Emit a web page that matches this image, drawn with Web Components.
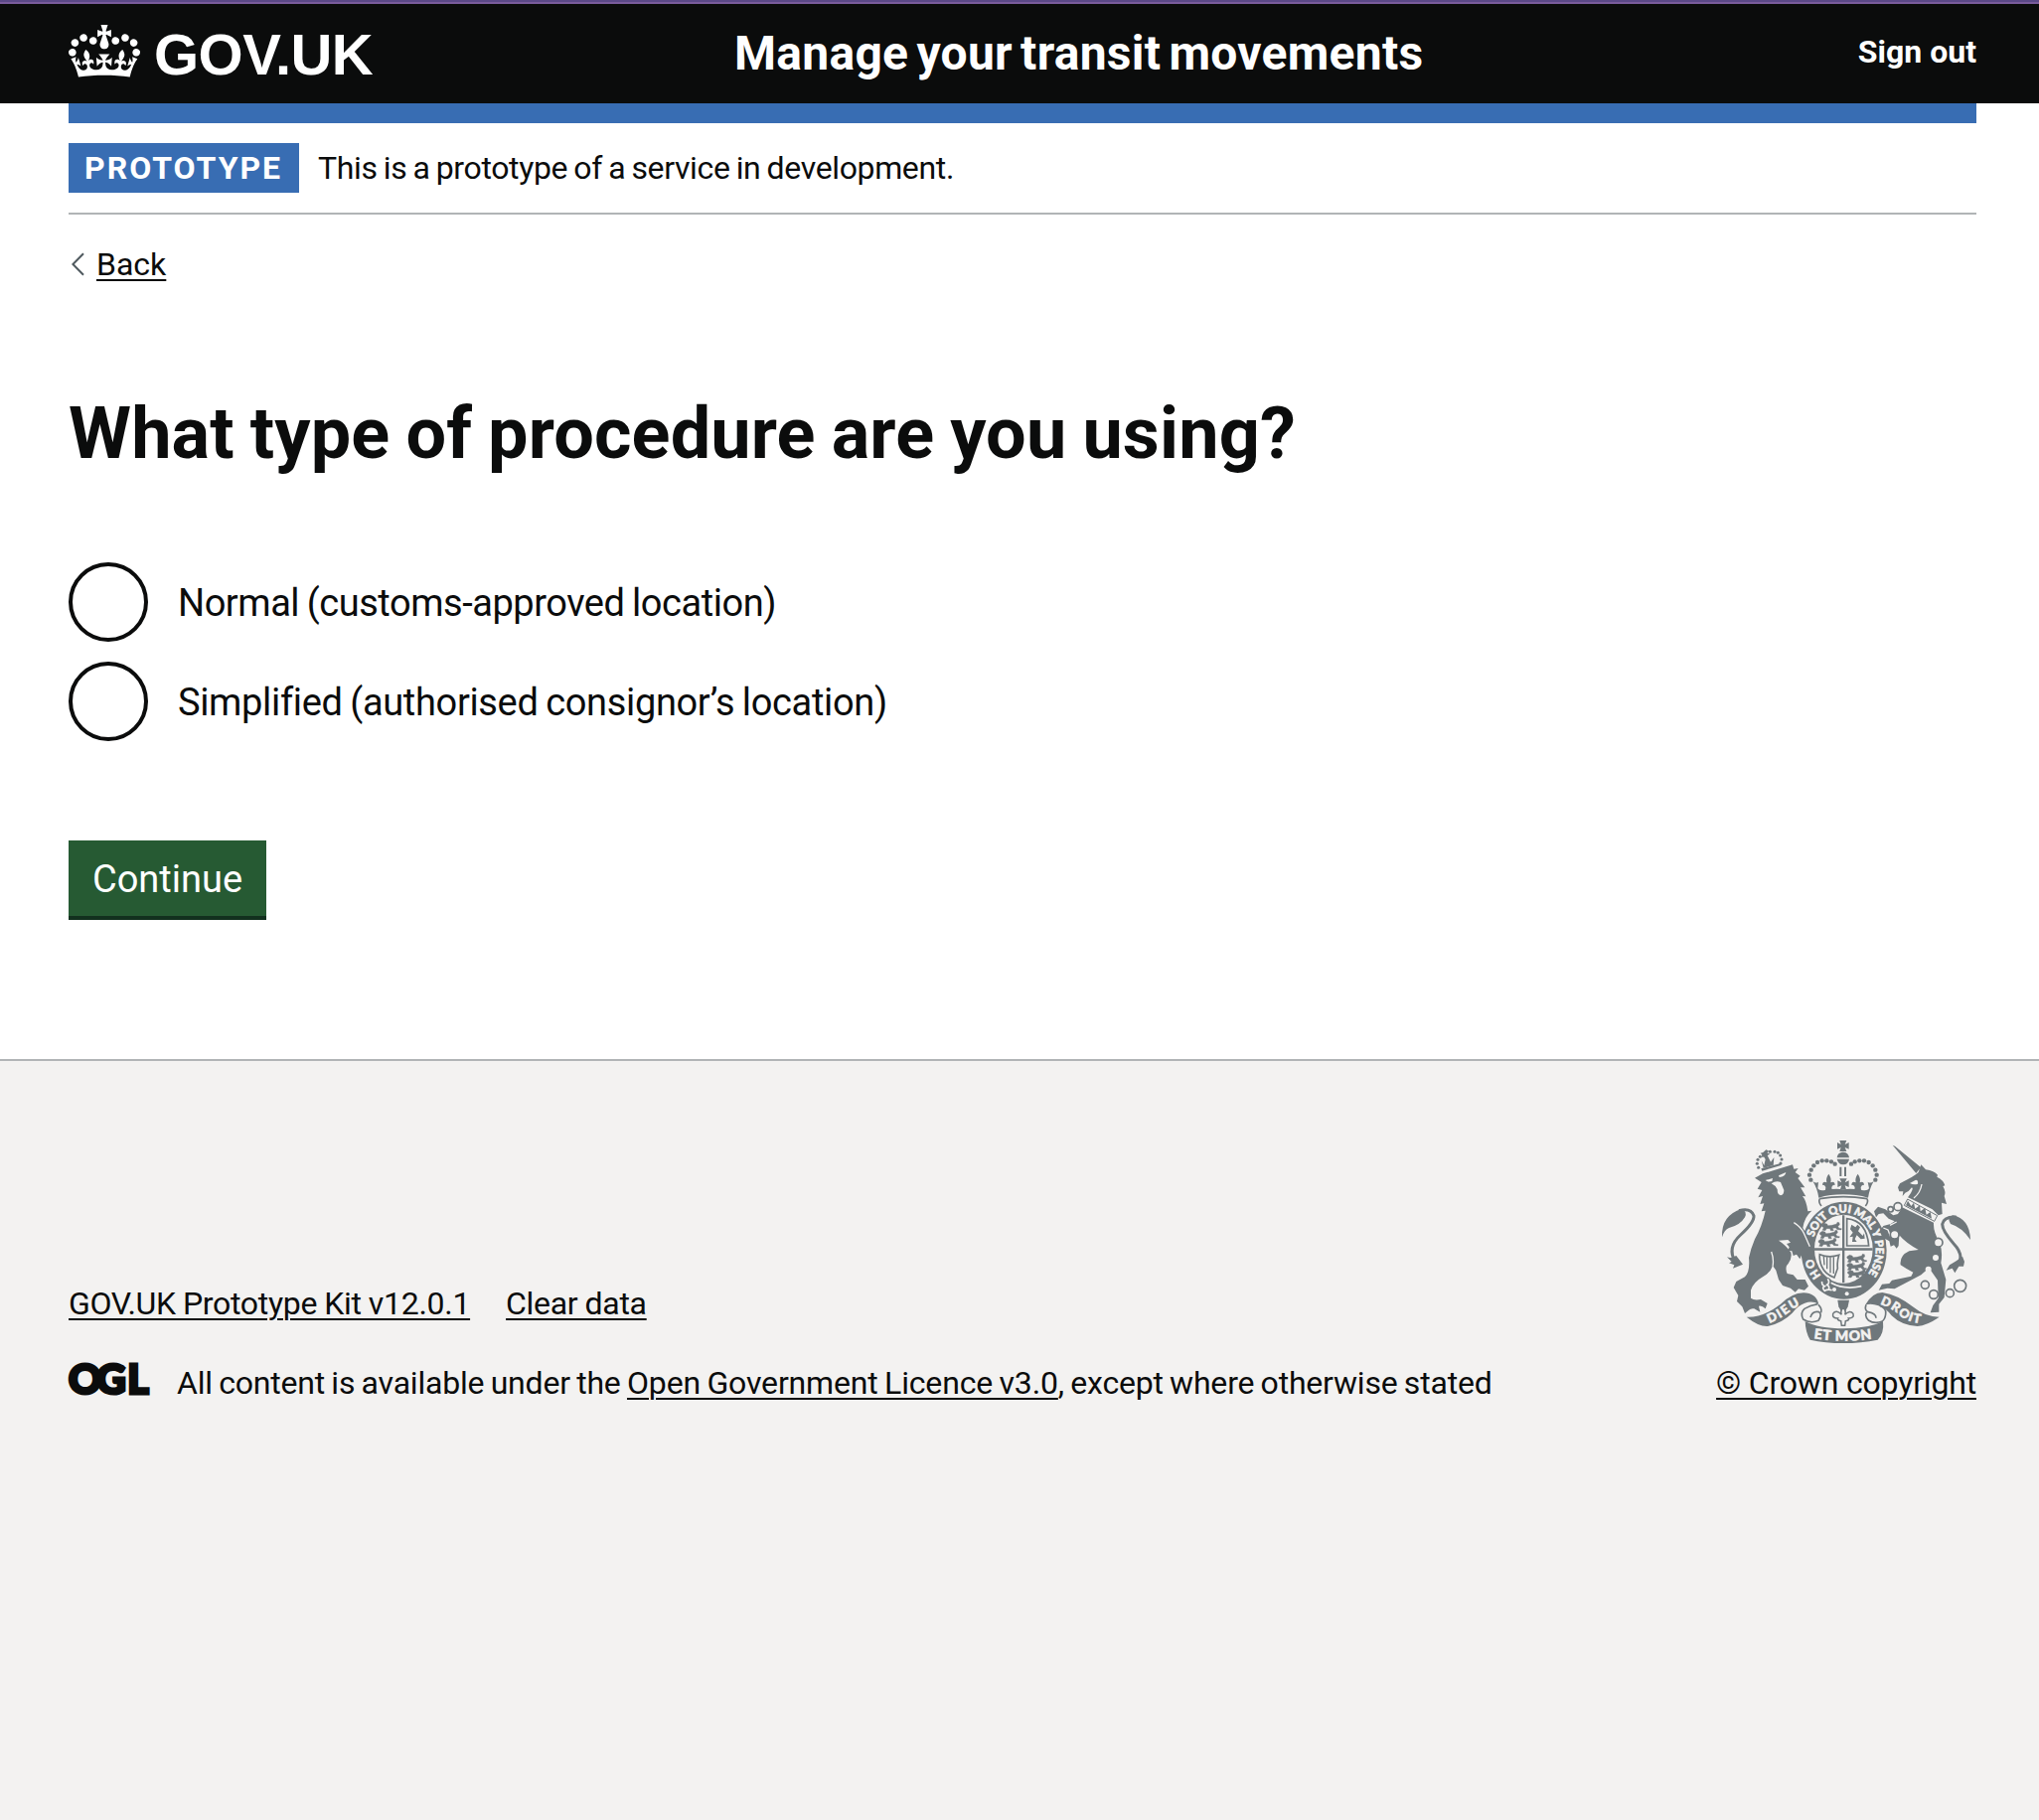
<!DOCTYPE html>
<html lang="en">
<head>
<meta charset="utf-8">
<title>What type of procedure are you using?</title>
<style>
html,body{margin:0;height:100%;background:#fff}
body{font-family:Roboto,"Liberation Sans",sans-serif;color:#0b0c0c;font-size:32px;line-height:40px}
</style>
</head>
<body>
<prototype-page></prototype-page>
<script>
function define(name, html){
  const t=document.createElement('template');
  t.innerHTML=html;
  customElements.define(name,class extends HTMLElement{
    constructor(){super();this.attachShadow({mode:'open'}).appendChild(t.content.cloneNode(true));}
  });
}

define('crown-icon',`<style>:host{display:block;width:72px;height:53px}svg{display:block}</style>
<svg width="72" height="53" viewBox="0 0 132 97"><path fill="#fff" fill-rule="evenodd" d="M25 30.2c3.5 1.5 7.7-.2 9.1-3.7 1.5-3.6-.2-7.8-3.9-9.2-3.6-1.4-7.6.3-9.1 3.9-1.4 3.5.3 7.5 3.9 9zM9 39.5c3.6 1.5 7.8-.2 9.2-3.7 1.5-3.6-.2-7.8-3.9-9.1-3.6-1.5-7.6.2-9.1 3.8-1.4 3.5.3 7.5 3.8 9zM4.4 57.2c3.5 1.5 7.7-.2 9.1-3.8 1.5-3.6-.2-7.7-3.9-9.1-3.5-1.5-7.6.3-9.1 3.8-1.4 3.5.3 7.6 3.9 9.1zm38.3-21.4c3.5 1.5 7.7-.2 9.1-3.8 1.5-3.6-.2-7.7-3.9-9.1-3.6-1.5-7.6.3-9.1 3.8-1.3 3.6.4 7.7 3.9 9.1zm64.4-5.6c-3.6 1.5-7.8-.2-9.1-3.7-1.5-3.6.2-7.8 3.8-9.2 3.6-1.4 7.7.3 9.2 3.9 1.3 3.5-.4 7.5-3.9 9zm15.9 9.3c-3.6 1.5-7.7-.2-9.1-3.7-1.5-3.6.2-7.8 3.7-9.1 3.6-1.5 7.7.2 9.2 3.8 1.5 3.5-.3 7.5-3.8 9zm4.7 17.7c-3.6 1.5-7.8-.2-9.2-3.8-1.5-3.6.2-7.7 3.9-9.1 3.6-1.5 7.7.3 9.2 3.8 1.3 3.5-.4 7.6-3.9 9.1zM89.3 35.8c-3.6 1.5-7.8-.2-9.2-3.8-1.4-3.6.2-7.7 3.9-9.1 3.6-1.5 7.7.3 9.2 3.8 1.4 3.6-.3 7.7-3.9 9.1zM69.7 17.7l8.9 4.7V9.3l-8.9 2.8c-.2-.3-.5-.6-.9-.9L72.4 0H59.6l3.5 11.2c-.3.3-.6.5-.9.9l-8.8-2.8v13.1l8.8-4.7c.3.3.6.7.9.9l-5 15.4v.1c-.2.8-.4 1.6-.4 2.4 0 4.1 3.1 7.5 7 8.1h.2c.3 0 .7.1 1 .1.4 0 .7 0 1-.1h.2c4-.6 7.1-4.1 7.1-8.1 0-.8-.1-1.7-.4-2.4V34l-5.1-15.4c.4-.2.7-.6 1-.9zM66 92.8c16.9 0 32.8 1.1 47.1 3.2 4-16.9 8.9-26.7 14-33.5l-9.6-3.4c1 4.9 1.1 7.2 0 10.2-1.5-1.4-3-4.3-4.2-8.7L108.6 76c2.8-2 5-3.2 7.5-3.3-4.4 9.4-10 11.9-13.6 11.2-4.3-.8-6.3-4.6-5.6-7.9 1-4.7 5.7-5.9 8-.5 4.3-8.7-3-11.4-7.6-8.8 7.1-7.2 7.9-13.5 2.1-21.1-8 6.1-8.1 12.3-4.5 20.8-4.7-5.4-12.1-2.5-9.5 6.2 3.4-5.2 7.9-2 7.2 3.1-.6 4.3-6.4 7.8-13.5 7.2-10.3-.9-10.9-8-11.2-13.8 2.5-.5 7.1 1.8 11 7.3L80.2 60c-4.1 4.4-8 5.3-12.3 5.4 1.4-4.4 8-11.6 8-11.6H55.5s6.4 7.2 7.9 11.6c-4.2-.1-8-1-12.3-5.4l1.4 16.4c3.9-5.5 8.5-7.7 10.9-7.3-.3 5.8-.9 12.8-11.1 13.8-7.2.6-12.9-2.9-13.5-7.2-.7-5 3.8-8.3 7.1-3.1 2.7-8.7-4.6-11.6-9.4-6.2 3.7-8.5 3.6-14.7-4.6-20.8-5.8 7.6-5 13.9 2.2 21.1-4.7-2.6-11.9.1-7.7 8.8 2.3-5.5 7.1-4.2 8.1.5.7 3.3-1.3 7.1-5.7 7.9-3.5.7-9-1.8-13.5-11.2 2.5.1 4.7 1.3 7.5 3.3l-4.7-15.4c-1.2 4.4-2.7 7.2-4.3 8.7-1.1-3-.9-5.3 0-10.2l-9.5 3.4c5 6.9 9.9 16.7 14 33.5 14.8-2.1 30.8-3.2 47.7-3.2z"/></svg>`);

define('gov-header',`<style>
:host{display:block;background:#0b0c0c;color:#fff;font-weight:700;border-top:2px solid #5b4987}
.in{border-top:2px solid #7a5c9c;height:100px;box-sizing:content-box;padding:0 63px 0 69px;display:flex;align-items:center}
.logo{width:670px;display:flex;align-items:center;gap:14px}
crown-icon{margin-bottom:5px}
.word{font:700 58px/60px "Liberation Sans",sans-serif;letter-spacing:-.55px;margin-top:1px}
.title{flex:1;font-size:48px;line-height:60px;letter-spacing:.27px;word-spacing:-4px}
.out{margin-bottom:4px}
.bar{height:20px;background:#386db3;margin:0 63px 0 69px}
.wrap{background:#fff}
</style>
<div class="in"><div class="logo"><crown-icon></crown-icon><span class="word">GOV.UK</span></div><span class="title"><slot></slot></span><span class="out"><slot name="action"></slot></span></div>
<div class="wrap"><div class="bar"></div></div>`);

define('phase-banner',`<style>
:host{display:flex;align-items:center;gap:19px;padding:20px 0;border-bottom:2px solid #b1b4b6;letter-spacing:-.36px;word-spacing:-1.4px}
.tag{background:#386db3;color:#fff;font-weight:700;letter-spacing:2px;padding:5px 16px;width:200px;white-space:nowrap}
</style><span class="tag"><slot name="tag"></slot></span><span><slot></slot></span>`);

define('back-link',`<style>
:host{display:flex;align-items:center;margin-top:30px;padding-left:3px}
svg{width:13px;height:24px;margin-right:12px}
span{text-decoration:underline 2px;text-underline-offset:4px}
</style><svg viewBox="0 0 13 24"><path d="M12 1.2 1.4 12 12 22.8" fill="none" stroke="#505a5f" stroke-width="2"/></svg><span><slot></slot></span>`);

define('page-heading',`<style>:host{display:block}h1{margin:111px 0 89px;font-size:72px;line-height:80px;font-weight:700;letter-spacing:.14px;word-spacing:-2px}</style><h1><slot></slot></h1>`);

define('radio-option',`<style>
:host{display:flex;align-items:center;gap:30px;font-size:38px;letter-spacing:-.34px;word-spacing:-1.4px}
i{box-sizing:border-box;width:80px;height:80px;border:4px solid #0b0c0c;border-radius:50%;background:#fff}
span{padding-top:2px}
</style><i></i><span><slot></slot></span>`);

define('radio-group',`<style>:host{display:flex;flex-direction:column;gap:20px}</style><slot></slot>`);

define('action-button',`<style>
:host{display:block;margin-top:100px}
button{display:block;box-sizing:border-box;width:199px;height:80px;border:0;border-bottom:4px solid #12301e;background:#265a33;color:#fff;font:400 38px/40px Roboto,sans-serif;padding:2px 0 0;border-radius:0;text-align:center}
</style><button><slot></slot></button>`);

define('text-link',`<style>:host{text-decoration:underline 2px;text-underline-offset:4px}</style><slot></slot>`);

define('ogl-logo',`<style>:host{display:block;width:84px;height:34px}svg{display:block;overflow:visible}</style>
<svg width="84" height="34"><text x="0 28 59.3" y="31.2" font-family="Lato" font-weight="900" font-size="41" fill="#0b0c0c" stroke="#0b0c0c" stroke-width="3.2">OGL</text></svg>`);

const G='#6f777b',B='#f3f2f1';
const ring=(x,y,r)=>`<circle cx="${x}" cy="${y}" r="${r}" fill="none" stroke="${G}" stroke-width="5"/>`;
let beads='';
for(const [x,y] of [[337,173],[333,158],[338,143],[346,130],[357,120],[371,115],[385,115],[399,118],[410,125],[532,173],[536,158],[532,143],[524,130],[512,120],[498,115],[484,115],[470,118],[459,125]])beads+=`<circle cx="${x}" cy="${y}" r="6.6"/>`;
let small='';
for(const [x,y] of [[179,136],[175,124],[177,112],[184,103],[194,99],[246,123],[249,111],[245,99],[238,91],[228,88],[214,88]])small+=`<circle cx="${x}" cy="${y}" r="4.6"/>`;
const beast=(x,y)=>`<path transform="translate(${x} ${y})" stroke="${G}" d="M0 5 8 0l8 2 3 5 12-1 14-4 2-5 6 1 1 7-5 4 3 6 8 1-1 4-12-1-5-5-9 1 3 7-9 0-2-6-10 0-4 6-9-1 4-8-5-3z"/>`;
define('royal-crest',`<style>:host{display:block;width:250px;height:204px}svg{display:block;overflow:visible}text{font-family:Lato,sans-serif;font-weight:900;letter-spacing:0;stroke:${B};stroke-width:1.6px}</style>
<svg width="250" height="204" viewBox="69 54 750 612" fill="${G}">
<defs>
<path id="garter" d="M368 462A96 112 0 1 1 497 471"/>
<path id="m1" d="M212 606Q252 590 282 564Q298 551 330 543"/>
<path id="m2" d="M346 652Q436 666 526 652"/>
<path id="m3" d="M546 548Q584 562 608 584Q632 604 678 607"/>
</defs>
<g>${beads}
<path d="M424 54h21l-5 12 12-6v20l-12-5 5 12h-21l4-12-11 5V60l11 6z"/>
<path d="M416 106a19 19 0 0 1 16-17h4a19 19 0 0 1 17 17z"/><path d="M416 110h37q-3 17-18 17t-19-17z"/>
<path d="M424 134h6v28h-6zm14 0h6v28h-6z"/>
<path d="M424 169h22l-6 12 12-6v20l-12-5 4 12h-18l4-12-12 5v-20l12 6z"/>
<path d="M391 155q10 14 6 26 12-6 13 8-6-2-10 6l1 9h-20l1-9q-4-8-10-6 1-14 13-8-4-12 6-26z"/>
<path d="M479 155q10 14 6 26 12-6 13 8-6-2-10 6l1 9h-20l1-9q-4-8-10-6 1-14 13-8-4-12 6-26z"/>
<path d="M343 177q10 8 17 2l-2 20q6 9 24 4 34-5 53-1 20-4 54 1 18 5 24-4l-4-20q8 6 18-2-12 20-17 50-35-10-75-10t-74 10q-4-28-18-50z"/>
<path d="M364 230q-5 10 5 22m138-22q5 10-5 22M364 230q71-12 143 0" fill="none" stroke="${G}" stroke-width="5"/></g>
<g><ellipse cx="437" cy="386" rx="129" ry="147"/><ellipse cx="436" cy="382" rx="88" ry="104" fill="${B}"/>
<path d="M432 280h7v204h-7zM348 379h176v7H348z"/>
${beast(370,304)}${beast(364,328)}${beast(360,352)}${beast(446,400)}${beast(446,424)}${beast(448,446)}
<path d="M446 290q60 6 66 82h-66z" fill="none" stroke="${G}" stroke-width="5"/>
<path d="M460 308l12 8 6-8 8 8-6 12 14 14 4-8 2 16-12 2-12-12-6 12 6 8h-14l2-16-10 2 10-14-8-10z"/>
<path d="M364 398q28 12 58 2-6 20-4 40l-10 28q-28-10-38-34-8-18-6-36z" fill="none" stroke="${G}" stroke-width="5"/>
<path d="M376 404l2 26m8-24v36m10-36v48m10-48v50" stroke="${G}" stroke-width="4"/>
<path d="M366 478q14-16 28-8l10 14q42 18 86 10l14 16q-60 36-116 4-16 4-24-14 8-4 2-22z"/>
<path d="M371 480q-2 10 8 14-10 4 0 14 10-6 22-2M388 472q8 12-2 18 10 6 4 16" fill="none" stroke="${B}" stroke-width="5"/>
<path d="M398 484q40 22 92 10" fill="none" stroke="${B}" stroke-width="5"/>
<circle cx="408" cy="504" r="6" fill="${B}"/><circle cx="446" cy="517" r="6" fill="${B}"/></g>
<g><path d="M190 146 247 129l-1-6-59 16z"/>${small}
<path d="M202 82l9 4-6 5 9 4-8 4 10 20 10-14-2 24-30 8-6-22 8 14 4-18-5-8-8 2 4-7-6-6 8-2z"/>
<path d="M168 167L192 154 282 127 286 140 299 138 290 150 305 161 298 168 319 196 306 196 322 223 312 222Q324 236 328 268L340 266Q318 284 313 318L334 352 346 392 334 412 326 398 318 414 310 398 304 412 294 398 284 402 280 388 268 386 272 376 264 366 276 362 268 354 240 356Q262 370 277 392 282 412 264 432 260 444 266 456L284 460 296 474 320 474 330 494 318 506 300 502 290 512 276 500 252 492 240 474 232 446 222 432Q216 452 192 466 164 482 156 506L156 530 Q166 538 186 534L206 546 200 562Q190 552 180 554L184 572 166 562Q156 560 150 566L138 576 130 556 114 540 118 522 104 498 112 480 138 466Q154 450 150 408 156 380 168 352 190 312 200 266L188 268 196 244 184 246 192 222 178 226 190 204 176 200 188 180Z"/>
<path d="M200 174l22-6-2 9q-12 4-20-3zm40-14 22-10q-2 14-20 15zm-22 24q14-10 28-4l10 24q0 14-10 16-10-2-10-18l-6-10z" fill="${B}"/>
<path d="M286 302q22 14 30 32l18 40M222 434q4-22-4-44" fill="none" stroke="${B}" stroke-width="4"/>
<path d="M69 346Q66 280 128 261 146 268 138 286 124 310 90 318 76 324 69 346z"/>
<path d="M120 266q36-10 45 15 2 20-40 58-42 38-16 82" fill="none" stroke="${G}" stroke-width="9"/>
<path d="M84 406q12 4 18 0l10-4 20 26-30 12 4-10-16-6 8-4z"/></g>
<g font-size="34" fill="${B}"><text><textPath href="#garter" textLength="58">HO</textPath><textPath href="#garter" startOffset="122" textLength="366">SOIT QUI MAL Y PENSE</textPath></text></g>
<g><path d="M584 68l7 3 78 64-14 18zM662 150L670 127 684 142Q710 146 720 158L718 164Q738 174 742 190L736 192Q746 210 740 222L747 246 732 242 734 276 722 280 704 262 672 246 640 230 630 226Q650 200 642 196 634 208 622 212L614 222 616 208 604 208 600 196 606 184 640 166 655 156Z"/>
<path d="M636 183l18-10q8 0 6 12-12 4-24-2z" fill="${B}"/>
<path d="M648 228q20-16 24-42" fill="none" stroke="${B}" stroke-width="4"/>
<path d="M629 231l90 50-9 17-91-48z" fill="${B}" stroke="${G}" stroke-width="3"/><path d="M624 250l6-14 10 16 8-10 4 18 14-10 2 18 14-10 4 20 12-8 4 20z"/>
<path d="M613 256L708 302Q706 330 726 362 736 390 730 424L745 474 740 528 724 548 724 572 698 574 706 552 722 530 720 476 696 442Q686 444 670 460 640 476 590 502L568 500 542 506 552 488 574 486 582 476 640 464 646 452Q622 440 608 430 604 402 634 388L662 384Q624 364 604 340L602 372 596 380 588 370 578 374 574 358 552 346 546 326 556 312 578 306 590 298 572 290 556 274 542 276 534 286 528 268 540 254 562 262 586 280 600 276Z"/>
<path d="M556 318l14 6 8 20m18-44 -20 10" stroke="${B}" stroke-width="4" fill="none"/>
<circle cx="590" cy="338" r="13" fill="${B}"/><circle cx="722" cy="362" r="13" fill="${B}"/>
<circle cx="714" cy="408" r="9" fill="${B}"/><circle cx="692" cy="443" r="9" fill="${B}"/>
${ring(578,262,8)}${ring(600,254,12)}${ring(590,338,13)}${ring(722,362,13)}${ring(682,490,12)}${ring(708,519,13)}${ring(757,515,12)}${ring(788,493,18)}
<path d="M819 354q-2-64-54-74-18 8-6 26 34 10 60 48z"/>
<path d="M776 285q-38-2-42 22 0 20 34 58 36 38 10 68" fill="none" stroke="${G}" stroke-width="9"/>
<path d="M795 404l6 16-3 14-14 0-12 20-8-14-18 6 10-16 20-12z"/></g>
<g><path d="M143 587q50 2 102-38 34-34 70-35 38 0 46 35-18-12-42-4-20 6-38 30-30 30-74 40-26 2-64-28z"/>
<path d="M725 587q-42 0-76-28-50-40-96-46-30 0-52 38 18-6 40 2 24 8 40 30 30 30 78 32 28-2 66-28z"/>
<path d="M320 600q40 22 117 22 76 0 118-22 4 36-16 56-50 10-104 10t-100-10q-14-22-15-56z"/>
<path d="M358 548Q334 552 318 562 304 574 314 594 336 608 360 598 372 580 362 572 342 568 336 588M360 550q12 12 8 24M504 550q-6 16 6 22 24 4 24 18M545 553q22 8 18 26-2 16-12 22-22 8-40-4-14-14-4-26" fill="none" stroke="${G}" stroke-width="5"/>
<path d="M418 536h35l-4 20-8 14h-12l-8-14z"/>
<path d="M435 558q10 12 5 22 16-16 25-3 4 14-14 14 4 6-9 8l-2 14h-10l-2-14q-12-2-9-8-18 0-15-14 10-14 26 3-5-10 5-22z" fill="${B}" stroke="${G}" stroke-width="4.5"/>
<g fill="${B}" font-size="38"><text><textPath href="#m1" textLength="108">DIEU</textPath></text><text font-size="42"><textPath href="#m2" textLength="176">ET MON</textPath></text><text><textPath href="#m3" textLength="136">DROIT</textPath></text></g></g>
</svg>`);

define('gov-footer',`<style>
:host{flex:1;display:block;box-sizing:border-box;border-top:2px solid #b1b4b6;background:#f3f2f1;padding:80px 63px 0 69px}
.row{display:flex;justify-content:space-between;align-items:flex-end}
.left{display:flex;flex-direction:column;gap:40px}
.links{display:flex;gap:36px;letter-spacing:-.3px;word-spacing:-.5px}
.lic{display:flex;align-items:flex-start;gap:25px;letter-spacing:-.2px;word-spacing:-1.4px}
.lic text-link{letter-spacing:-.15px}
.right{display:flex;flex-direction:column;align-items:center;gap:20px;letter-spacing:-.18px}
</style>
<div class="row"><div class="left">
<div class="links"><text-link>GOV.UK Prototype Kit v12.0.1</text-link><text-link>Clear data</text-link></div>
<div class="lic"><ogl-logo></ogl-logo><span>All content is available under the <text-link>Open Government Licence v3.0</text-link>, except where otherwise stated</span></div>
</div><div class="right"><royal-crest></royal-crest><text-link>© Crown copyright</text-link></div></div>`);

define('prototype-page',`<style>
:host{display:flex;flex-direction:column;min-height:100vh}
main{padding:0 63px 140px 69px}
.snug{letter-spacing:-.46px}
</style>
<gov-header>Manage your transit movements<span slot="action">Sign out</span></gov-header>
<main>
<phase-banner><span slot="tag">PROTOTYPE</span>This is a prototype of a service in development.</phase-banner>
<back-link>Back</back-link>
<page-heading>What type of procedure are you using?</page-heading>
<radio-group><radio-option class="snug">Normal (customs-approved location)</radio-option><radio-option>Simplified (authorised consignor’s location)</radio-option></radio-group>
<action-button>Continue</action-button>
</main>
<gov-footer></gov-footer>`);
</script>
</body>
</html>
